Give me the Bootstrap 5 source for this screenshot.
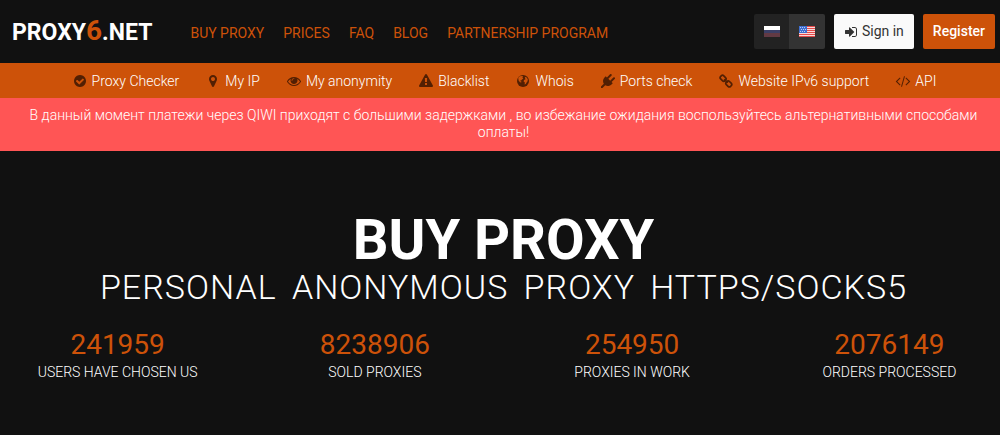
<!DOCTYPE html>
<html lang="en">
<head>
<meta charset="utf-8">
<meta name="viewport" content="width=device-width, initial-scale=1">
<title>PROXY6.NET</title>
<link href="https://cdn.jsdelivr.net/npm/bootstrap@5.3.0/dist/css/bootstrap.min.css" rel="stylesheet">
<style>
  body { background: #111; color: #fff; font-family: Roboto, "Noto Sans", sans-serif; font-size: 14px; line-height: 18px; overflow-x: hidden; }
  a { text-decoration: none; }
  .site-header { min-height: 63px; padding: 0 5px 0 12px; }
  .brand { color: #fff; font-size: 23px; line-height: 32px; font-weight: 700; }
  .brand:hover { color: #fff; }
  .brand span { color: #cd5209; font-size: 28px; }
  .main-nav { gap: 19px; margin-left: 38px; padding-top: 2px; }
  .main-nav a { color: #cd5209; font-size: 14px; }
  .head-actions { gap: 9px; }
  .head-btn { height: 35px; border-radius: 2px; font-size: 14px; padding: 0 10px; border: 0; }
  .lang-btn { width: 36px; height: 35px; border: 0; border-radius: 2px; padding: 0; background: #222; }
  .lang-btn.active { background: #333; }
  .btn-signin { background: #fafafa; color: #333; gap: 4px; }
  .btn-register { background: #cd5209; color: #fff; font-weight: 500; }
  .tools-bar { background: #cd5209; min-height: 35px; padding-left: 7px; gap: 25px; font-weight: 300; }
  .tools-bar a { color: #fff; gap: 3px; }
  .tools-bar svg { fill: #521f03; width: 18px; height: 14px; }
  .notice { background: #ff5555; padding: 9px 12px 9px 19px; line-height: 17px; font-weight: 300; min-height: 53px; }
  .hero { padding: 59px 12px 54px 19px; }
  .hero h1 { font-size: 56px; line-height: 60px; font-weight: 700; }
  .hero h2 { font-size: 34px; line-height: 34px; font-weight: 300; letter-spacing: 1px; word-spacing: 6px; }
  .stats { margin: 22px -30px 0; font-weight: 300; }
  .stats strong { color: #cd5209; font-size: 28px; line-height: 37px; font-weight: 400; }
</style>
</head>
<body>
<header class="site-header d-flex align-items-center">
  <a class="brand" href="#">PROXY<span>6</span>.NET</a>
  <nav class="main-nav d-flex" aria-label="Main">
    <a href="#">BUY PROXY</a><a href="#">PRICES</a><a href="#">FAQ</a><a href="#">BLOG</a><a href="#">PARTNERSHIP PROGRAM</a>
  </nav>
  <div class="head-actions d-flex ms-auto">
    <div class="btn-group">
      <button type="button" class="btn lang-btn d-flex align-items-center justify-content-center" aria-label="Russian">
        <svg width="16" height="11" viewBox="0 0 16 11"><path fill="#fff" d="M0 0h16v4H0z"/><path fill="#3b3f66" d="M0 4h16v3H0z"/><path fill="#623a44" d="M0 7h16v4H0z"/></svg>
      </button>
      <button type="button" class="btn lang-btn active d-flex align-items-center justify-content-center" aria-label="English">
        <svg width="16" height="11" viewBox="0 0 16 11"><path fill="#f7dada" d="M0 0h16v11H0z"/><path stroke="#e54b4b" d="M0 .5h16M0 2.5h16M0 4.5h16M0 6.5h16M0 8.5h16M0 10.5h16"/><path fill="#3f6fd0" d="M0 0h8v7H0z"/><path stroke="#b9cdf5" stroke-dasharray="1 1" d="M1 1.5h6M2 3.5h5M1 5.5h6"/></svg>
      </button>
    </div>
    <button type="button" class="btn head-btn btn-signin d-flex align-items-center">
      <svg width="14" height="14" viewBox="0 0 1792 1792" fill="currentColor"><path d="M1312 896q0 26-19 45l-544 544q-19 19-45 19t-45-19-19-45v-288h-448q-26 0-45-19t-19-45v-384q0-26 19-45t45-19h448v-288q0-26 19-45t45-19 45 19l544 544q19 19 19 45zm352-352v704q0 119-84.5 203.5t-203.5 84.5h-320q-13 0-22.5-9.5t-9.5-22.5q0-4-1-20t-.5-26.5 3-23.5 10-19.5 20.5-6.5h320q66 0 113-47t47-113v-704q0-66-47-113t-113-47h-312l-11.5-1-11.5-3-8-5.5-7-9-2-13.5q0-4-1-20t-.5-26.5 3-23.5 10-19.5 20.5-6.5h320q119 0 203.5 84.5t84.5 203.5z"/></svg>Sign in
    </button>
    <button type="button" class="btn head-btn btn-register">Register</button>
  </div>
</header>

<nav class="tools-bar d-flex justify-content-center align-items-center" aria-label="Tools">
  <a href="#" class="d-flex align-items-center"><svg viewBox="0 0 1792 1792"><path d="M1412 734q0-28-18-46l-91-90q-19-19-45-19t-45 19l-408 407-226-226q-19-19-45-19t-45 19l-91 90q-18 18-18 46 0 27 18 45l362 362q19 19 45 19 27 0 46-19l543-543q18-18 18-45zm252 162q0 209-103 385.5t-279.5 279.5-385.5 103-385.5-103-279.5-279.5-103-385.5 103-385.5 279.5-279.5 385.5-103 385.5 103 279.5 279.5 103 385.5z"/></svg>Proxy Checker</a>
  <a href="#" class="d-flex align-items-center"><svg viewBox="0 0 1792 1792"><path d="M1152 640q0-106-75-181t-181-75-181 75-75 181 75 181 181 75 181-75 75-181zm256 0q0 109-33 179l-364 774q-16 33-47.5 52t-67.5 19-67.5-19-46.5-52l-365-774q-33-70-33-179 0-212 150-362t362-150 362 150 150 362z"/></svg>My IP</a>
  <a href="#" class="d-flex align-items-center"><svg viewBox="0 0 1792 1792"><path d="M1664 960q-152-236-381-353 61 104 61 225 0 185-131.5 316.5t-316.5 131.5-316.5-131.5-131.5-316.5q0-121 61-225-229 117-381 353 133 205 333.5 326.5t434.5 121.5 434.5-121.5 333.5-326.5zm-720-384q0-20-14-34t-34-14q-125 0-214.5 89.5t-89.5 214.5q0 20 14 34t34 14 34-14 14-34q0-86 61-147t147-61q20 0 34-14t14-34zm848 384q0 34-20 69-140 230-376.5 368.5t-499.5 138.5-499.5-139-376.5-368q-20-35-20-69t20-69q140-229 376.5-368t499.5-139 499.5 139 376.5 368q20 35 20 69z"/></svg>My anonymity</a>
  <a href="#" class="d-flex align-items-center"><svg viewBox="0 0 1792 1792"><path d="M1024 1375v-190q0-14-9.5-23.5t-22.5-9.5h-192q-13 0-22.5 9.5t-9.5 23.5v190q0 14 9.5 23.5t22.5 9.5h192q13 0 22.5-9.5t9.5-23.5zm-2-374l18-459q0-12-10-19-13-11-24-11h-220q-11 0-24 11-10 7-10 21l17 457q0 10 10 16.5t24 6.5h185q14 0 23.5-6.5t10.5-16.5zm-14-934l768 1408q35 63-2 126-17 29-46.5 46t-63.5 17h-1536q-34 0-63.5-17t-46.5-46q-37-63-2-126l768-1408q17-31 47-49t65-18 65 18 47 49z"/></svg>Blacklist</a>
  <a href="#" class="d-flex align-items-center"><svg viewBox="0 0 14 14"><circle cx="7" cy="7" r="6"/><path fill="#cd5209" d="M2.2 3.8 3.8 2.3 6 1.9 7.2 2.6 6.4 3.7 7.4 4.5 6 5.4 5.2 6.6 4.2 6.5 4.5 7.2 5.4 7.6 5.2 8.6 4 8.2 2.6 6.6ZM8.8 2.8 10.7 3.4 11.8 5.2 11.6 7.2 10.6 8.6 9.8 9.9 8.6 10.4 8.9 8.5 7.6 7.4 8 6 9.5 5.2 9 4Z"/></svg>Whois</a>
  <a href="#" class="d-flex align-items-center"><svg viewBox="0 0 1792 1792"><path d="M1755 453q37 38 37 90.5t-37 90.5l-401 400 150 150-160 160q-163 163-389.5 186.5t-411.5-100.5l-362 362h-181v-181l362-362q-124-185-100.5-411.5t186.5-389.5l160-160 150 150 400-401q38-37 91-37t90 37 37 90.5-37 90.5l-400 401 234 234 401-400q38-37 91-37t90 37z"/></svg>Ports check</a>
  <a href="#" class="d-flex align-items-center"><svg viewBox="0 0 14 14"><g fill="none" stroke="#521f03" stroke-width="1.7" transform="rotate(45 7 7)"><rect x="0" y="4.9" width="6" height="4.4" rx="1.8"/><rect x="8" y="4.9" width="6" height="4.4" rx="1.8"/><path d="M4.5 7h5"/></g></svg>Website IPv6 support</a>
  <a href="#" class="d-flex align-items-center"><svg viewBox="0 0 1792 1792" overflow="visible"><path d="M553 1399l-50 50q-10 10-23 10t-23-10l-466-466q-10-10-10-23t10-23l466-466q10-10 23-10t23 10l50 50q10 10 10 23t-10 23l-393 393 393 393q10 10 10 23t-10 23zm591-1067l-373 1291q-4 13-15.5 19.5t-23.5 2.5l-62-17q-13-4-19.5-15.5t-2.5-24.5l373-1291q4-13 15.5-19.5t23.5-2.5l62 17q13 4 19.5 15.5t2.5 24.5zm657 651l-466 466q-10 10-23 10t-23-10l-50-50q-10-10-10-23t10-23l393-393-393-393q-10-10-10-23t10-23l50-50q10-10 23-10t23 10l466 466q10 10 10 23t-10 23z"/></svg>API</a>
</nav>

<div class="notice text-center">В данный момент платежи через QIWI приходят с большими задержками , во избежание ожидания воспользуйтесь альтернативными способами оплаты!</div>

<main class="hero text-center overflow-hidden">
  <h1 class="m-0">BUY PROXY</h1>
  <h2 class="m-0">PERSONAL ANONYMOUS PROXY HTTPS/SOCKS5</h2>
  <div class="stats row g-0">
    <div class="col-3"><strong class="d-block">241959</strong>USERS HAVE CHOSEN US</div>
    <div class="col-3"><strong class="d-block">8238906</strong>SOLD PROXIES</div>
    <div class="col-3"><strong class="d-block">254950</strong>PROXIES IN WORK</div>
    <div class="col-3"><strong class="d-block">2076149</strong>ORDERS PROCESSED</div>
  </div>
</main>
<script src="https://cdn.jsdelivr.net/npm/bootstrap@5.3.0/dist/js/bootstrap.bundle.min.js"></script>
</body>
</html>
